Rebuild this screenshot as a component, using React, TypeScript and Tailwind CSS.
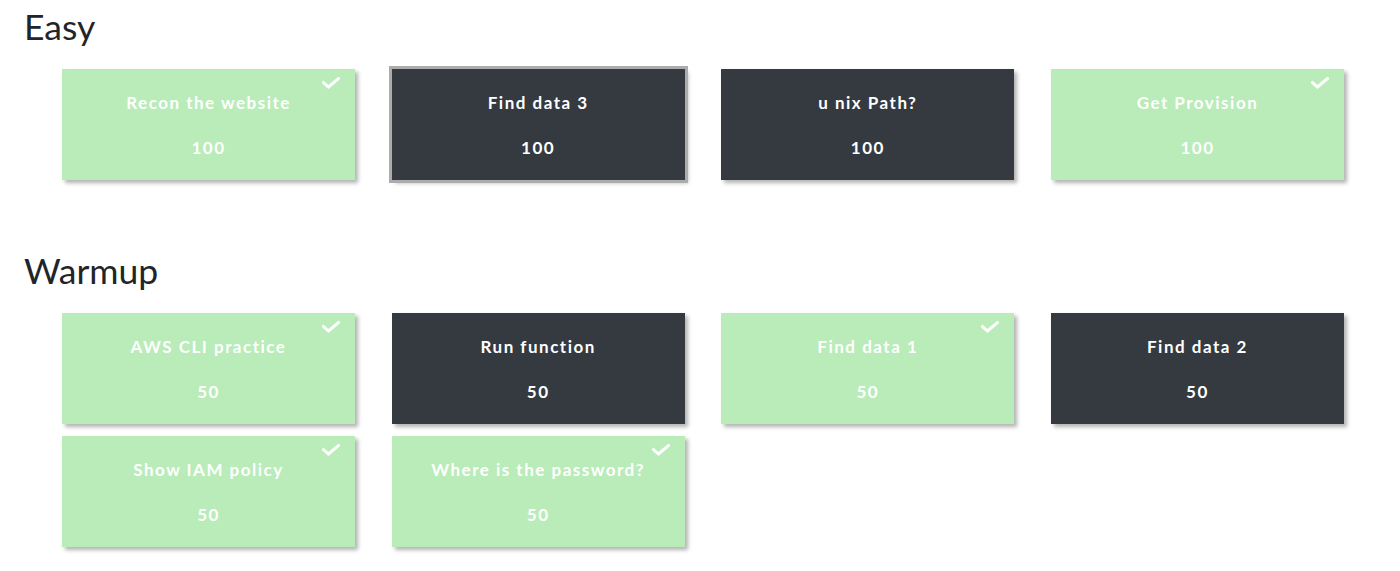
import React from "react";

type Ch = { name: string; value: number; solved: boolean; selected?: boolean };

const easy: Ch[] = [
  { name: "Recon the website", value: 100, solved: true },
  { name: "Find data 3", value: 100, solved: false, selected: true },
  { name: "u nix Path?", value: 100, solved: false },
  { name: "Get Provision", value: 100, solved: true },
];

const warmup: Ch[] = [
  { name: "AWS CLI practice", value: 50, solved: true },
  { name: "Run function", value: 50, solved: false },
  { name: "Find data 1", value: 50, solved: true },
  { name: "Find data 2", value: 50, solved: false },
  { name: "Show IAM policy", value: 50, solved: true },
  { name: "Where is the password?", value: 50, solved: true },
];

function Check() {
  return (
    <svg width="18" height="12" viewBox="0 0 18 12" className="absolute right-[15px] top-[8px]">
      <polyline points="1.5,5.5 6.5,10 16.5,1.5" fill="none" stroke="white" strokeWidth="3" strokeLinecap="square" />
    </svg>
  );
}

function Card({ c }: { c: Ch }) {
  return (
    <div
      className={
        "relative h-[111px] flex flex-col items-center pt-[22px] pb-[20px] gap-[21px] text-white font-bold text-[17px] leading-[24px] tracking-[1.5px] shadow-[3px_3px_4px_rgba(0,0,0,0.3)] " +
        (c.solved ? "bg-[#b9ecb8]" : "bg-[#343a40]") +
        (c.selected ? " outline-[3px] outline-solid outline-[#acacac]" : "")
      }
    >
      {c.solved && <Check />}
      <div>{c.name}</div>
      <div>{c.value}</div>
    </div>
  );
}

function Section({ title, items, first }: { title: string; items: Ch[]; first?: boolean }) {
  return (
    <div className={first ? "pt-[6px]" : "pt-[70px]"}>
      <h2 className="pl-[24px] text-[35.5px] leading-[42px] text-[#212529] font-normal">{title}</h2>
      <div className="pl-[62px] pt-[21px] grid grid-cols-[repeat(4,293px)] gap-x-[36.67px] gap-y-[12px]">
        {items.map((c) => (
          <Card key={c.name} c={c} />
        ))}
      </div>
    </div>
  );
}

export default function App() {
  return (
    <div className="w-[1400px] h-[571px] bg-white overflow-hidden" style={{ fontFamily: "Lato, 'Open Sans', sans-serif" }}>
      <Section title="Easy" items={easy} first />
      <Section title="Warmup" items={warmup} />
    </div>
  );
}
